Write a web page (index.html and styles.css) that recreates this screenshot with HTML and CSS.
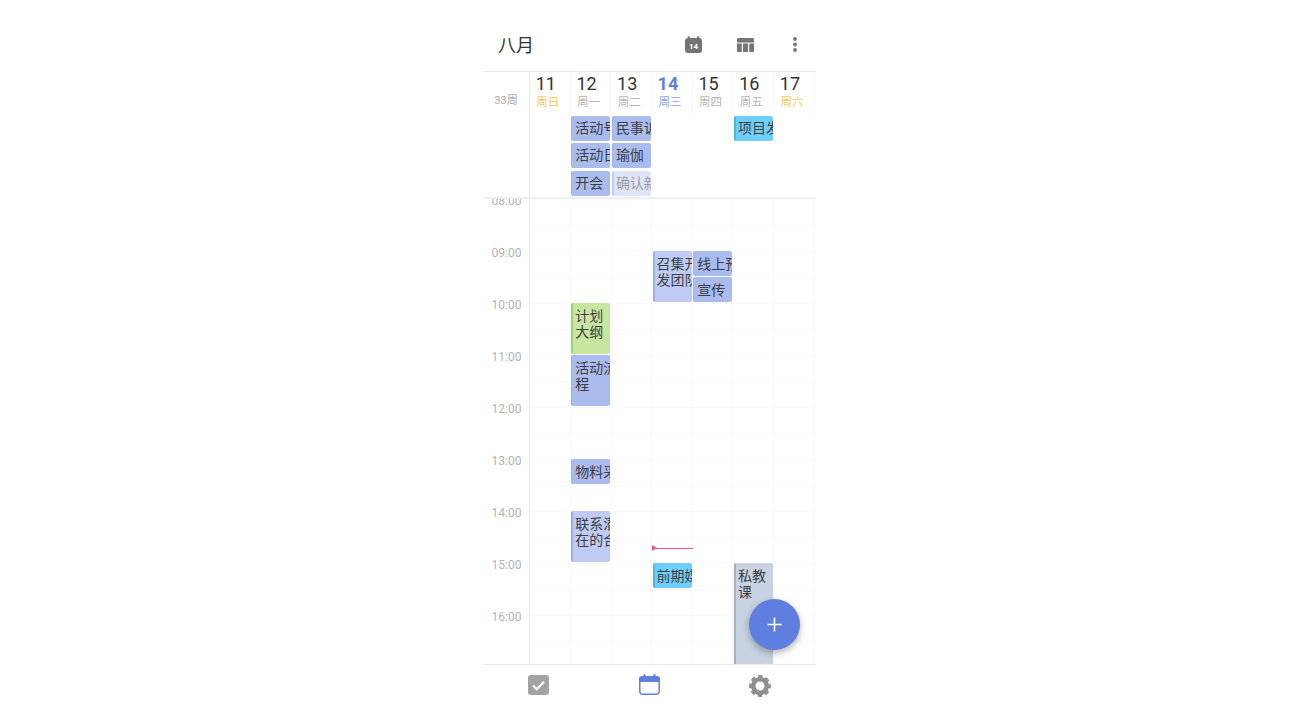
FILE: index.html
```html
<!DOCTYPE html>
<html lang="zh-CN">

<head>
    <meta charset="UTF-8">
    <meta name="viewport" content="width=device-width, initial-scale=1.0">
    <title>八月</title>
    <link rel="stylesheet" href="styles.css">
</head>

<body>
    <div class="phone">
        <header class="topbar">
            <h1>八月</h1>
            <div class="actions">
                <svg class="icon-today" viewBox="0 0 17 17">
                    <path fill="#757575" d="M2.500 1.500a1 1 0 0 1 2.500 0V2h7v-.5a1 1 0 0 1 2.500 0V2H14a3 3 0 0 1 3 3v9a3 3 0 0 1-3 3H3a3 3 0 0 1-3-3V5a3 3 0 0 1 2.500-3z"/>
                    <text x="8.500" y="12.800" text-anchor="middle" class="today-num">14</text>
                </svg>
                <svg class="icon-table" viewBox="0 0 17 14">
                    <path fill="#757575" d="M1 0h15a1 1 0 0 1 1 1v3.500H0V1a1 1 0 0 1 1-1zM0 5.500h4.800V14H1a1 1 0 0 1-1-1zM6 5.500h5V14H6zM12.200 5.500H17V13a1 1 0 0 1-1 1h-3.800z"/>
                </svg>
                <svg class="icon-more" viewBox="0 0 4 15">
                    <circle cx="2" cy="2" r="1.900" fill="#757575"/>
                    <circle cx="2" cy="7.500" r="1.900" fill="#757575"/>
                    <circle cx="2" cy="13" r="1.900" fill="#757575"/>
                </svg>
            </div>
        </header>

        <section class="weekhead">
            <div class="daterow">
                <div class="weeknum">33周</div>
                <div class="day"><b>11</b><span class="weekend">周日</span></div>
                <div class="day"><b>12</b><span>周一</span></div>
                <div class="day"><b>13</b><span>周二</span></div>
                <div class="day today"><b>14</b><span>周三</span></div>
                <div class="day"><b>15</b><span>周四</span></div>
                <div class="day"><b>16</b><span>周五</span></div>
                <div class="day"><b>17</b><span class="weekend">周六</span></div>
            </div>
            <div class="allday">
                <div class="ev indigo col-2 allrow-1">活动号</div>
                <div class="ev indigo col-3 allrow-1">民事诉</div>
                <div class="ev sky col-6 allrow-1">项目发</div>
                <div class="ev indigo col-2 allrow-2">活动日</div>
                <div class="ev indigo col-3 allrow-2">瑜伽</div>
                <div class="ev indigo col-2 allrow-3">开会</div>
                <div class="ev faded col-3 allrow-3">确认新</div>
            </div>
        </section>

        <main class="schedule">
            <div class="times">
                <div>08:00</div>
                <div>09:00</div>
                <div>10:00</div>
                <div>11:00</div>
                <div>12:00</div>
                <div>13:00</div>
                <div>14:00</div>
                <div>15:00</div>
                <div>16:00</div>
                <div>17:00</div>
            </div>
            <div class="week">
                <div class="ev light col-4 row-3 span-2">召集开<br>发团队</div>
                <div class="ev indigo col-5 row-3 span-1">线上预</div>
                <div class="ev indigo col-5 row-4 span-1">宣传</div>
                <div class="ev green col-2 row-5 span-2">计划<br>大纲</div>
                <div class="ev indigo col-2 row-7 span-2">活动流<br>程</div>
                <div class="ev indigo col-2 row-11 span-1">物料采</div>
                <div class="ev light col-2 row-13 span-2">联系潜<br>在的合</div>
                <div class="ev sky col-4 row-15 span-1">前期媒</div>
                <div class="ev slate col-6 row-15 span-4">私教<br>课</div>
                <div class="nowline"></div>
            </div>
        </main>

        <button class="fab" type="button">
            <svg viewBox="0 0 16 16"><path d="M8 .5v15M.5 8h15" stroke="#fff" stroke-width="1.700"/></svg>
        </button>

        <nav class="tabbar">
            <svg class="tab-check" viewBox="0 0 21 20">
                <rect width="21" height="20" rx="3" fill="#a3a3a3"/>
                <path d="M5 10.500l3.800 3.800L16 6.800" fill="none" stroke="#fff" stroke-width="2"/>
            </svg>
            <svg class="tab-cal" viewBox="0 0 21 21">
                <path fill="#5f7fe0" d="M4.500 1a1 1 0 0 1 2 0v1h8V1a1 1 0 0 1 2 0v1H18a3 3 0 0 1 3 3v3H0V5a3 3 0 0 1 3-3h1.500z"/>
                <path fill="none" stroke="#5f7fe0" stroke-width="1.500" d="M.8 8v9.500a2.700 2.700 0 0 0 2.700 2.700h14a2.700 2.700 0 0 0 2.700-2.700V8"/>
            </svg>
            <svg class="tab-gear" viewBox="0 0 22 22">
                <circle cx="11" cy="11" r="6.800" fill="none" stroke="#8f8f8f" stroke-width="4.600"/>
                <circle cx="11" cy="11" r="9.500" fill="none" stroke="#8f8f8f" stroke-width="2.800" stroke-dasharray="4.500 2.960" stroke-dashoffset="2.250"/>
            </svg>
        </nav>
    </div>
</body>

</html>
```

FILE: styles.css
```css
* {
    box-sizing: border-box;
}

html, body {
    margin: 0;
    height: 100%;
    background: #fff;
}

body {
    font-family: Roboto, "Noto Sans CJK SC", sans-serif;
    color: #3a3e47;
    overflow: hidden;
}

.phone {
    position: relative;
    width: 332px;
    height: 727px;
    margin: 0 auto;
    display: flex;
    flex-direction: column;
    overflow: hidden;
}

/* top bar */
.topbar {
    height: 52px;
    margin-top: 20px;
    padding: 0 0 0 14px;
    display: flex;
    align-items: center;
    justify-content: space-between;
    border-bottom: 1px solid #ececec;
    flex: none;
}

.topbar h1 {
    margin: 0;
    font-size: 18px;
    font-weight: 400;
    color: #333;
    line-height: 24px;
}

.actions {
    display: flex;
    align-items: center;
    margin-bottom: 2px;
}

.icon-today {
    width: 17px;
    height: 17px;
    margin-right: 34.500px;
}

.today-num {
    fill: #fff;
    font-family: Roboto, sans-serif;
    font-size: 8px;
    font-weight: 700;
}

.icon-table {
    width: 17px;
    height: 14px;
    margin-right: 39.500px;
}

.icon-more {
    width: 4px;
    height: 15px;
    margin-right: 19px;
}

/* week header */
.weekhead {
    height: 127px;
    flex: none;
    border-bottom: 2px solid #efefef;
    background: linear-gradient(#ececec, #ececec) 45px 0 / 1px 100% no-repeat;
}

.daterow {
    display: grid;
    grid-template-columns: 46px repeat(7, 40.7px);
    height: 42px;
}

.weeknum {
    font-size: 11px;
    color: #aaa;
    text-align: center;
    line-height: 14px;
    padding: 22px 2px 0 0;
}

.day {
    display: flex;
    flex-direction: column;
    align-items: center;
    padding: 1px 5px 0 0;
    border-right: 1px solid #f7f7f7;
}

.day b {
    font-size: 18px;
    font-weight: 400;
    line-height: 21px;
    color: #333;
    margin-right: 3px;
}

.day span {
    font-size: 11.500px;
    line-height: 14px;
    margin: 1px 0 0 1px;
    color: #b4b4b4;
}

.day span.weekend {
    color: #f7c94f;
}

.today b {
    font-weight: 700;
    color: #5f7fe0;
}

.today span {
    color: #8ba2ea;
}

.allday {
    display: grid;
    grid-template-columns: repeat(7, 40.7px);
    grid-template-rows: repeat(3, 25px);
    gap: 2.7px 0;
    margin: 1.500px 0 0 46px;
    height: 84px;
}

/* events */
.ev {
    width: 39px;
    margin: 0 0 1px 0.500px;
    padding: 5px 0 0 3px;
    font-size: 14px;
    line-height: 16px;
    white-space: nowrap;
    border-left: 1px solid transparent;
    border-radius: 2px;
    overflow: hidden;
}

.allday .ev {
    margin-bottom: 0;
    padding-top: 4px;
}

.indigo {
    background: #aabbee;
    border-left-color: #9fb2ea;
}

.light {
    background: #bfcbf2;
    border-left: 2px solid #9aaee9;
    padding-left: 2px;
}

.faded {
    background: #dfe4f8;
    border-left: 2px solid #c3cef3;
    padding-left: 2px;
    color: #9a9caa;
}

.green {
    background: #c8e6a0;
    border-left: 2px solid #a5d06f;
    padding-left: 2px;
}

.sky {
    background: #6fcffb;
    border-left: 2px solid #45b9ee;
    padding-left: 2px;
}

.slate {
    background: #c9d2e1;
    border-left: 2px solid #a5b1c9;
    padding-left: 2px;
}

.col-2 { grid-column: 2; }
.col-3 { grid-column: 3; }
.col-4 { grid-column: 4; }
.col-5 { grid-column: 5; }
.col-6 { grid-column: 6; }

.allrow-1 { grid-row: 1; }
.allrow-2 { grid-row: 2; }
.allrow-3 { grid-row: 3; }

.row-3 { grid-row-start: 3; }
.row-4 { grid-row-start: 4; }
.row-5 { grid-row-start: 5; }
.row-7 { grid-row-start: 7; }
.row-11 { grid-row-start: 11; }
.row-13 { grid-row-start: 13; }
.row-15 { grid-row-start: 15; }

.span-1 { grid-row-end: span 1; }
.span-2 { grid-row-end: span 2; }
.span-4 { grid-row-end: span 4; }

/* hour grid */
.schedule {
    flex: none;
    height: 465px;
    display: flex;
    overflow: hidden;
}

.times {
    width: 46px;
    flex: none;
    border-right: 1px solid #ececec;
    font-size: 12px;
    color: #b4b4b4;
    text-align: center;
}

.times div {
    height: 52px;
    line-height: 16px;
    position: relative;
    top: -6px;
}

.week {
    position: relative;
    flex: 1;
    display: grid;
    grid-template-columns: repeat(7, 40.7px);
    grid-template-rows: repeat(18, 26px);
    background-image:
        linear-gradient(to right, transparent 39.7px, #f8f8f8 39.7px),
        linear-gradient(to bottom, #f9f9f9 1px, transparent 1px);
    background-size: 40.7px 100%, 100% 26px;
}

.nowline {
    position: absolute;
    left: 122px;
    top: 349px;
    width: 40.500px;
    height: 1px;
    background: #f4568a;
}

.nowline::before {
    content: "";
    position: absolute;
    left: 0;
    top: -3px;
    border-left: 5px solid #f4568a;
    border-top: 3.500px solid transparent;
    border-bottom: 3.500px solid transparent;
}

/* add button */
.fab {
    position: absolute;
    left: 265px;
    top: 599px;
    width: 51px;
    height: 51px;
    padding: 0;
    border: none;
    border-radius: 50%;
    background: #5f7fe0;
    box-shadow: 0 3px 7px rgba(0, 0, 0, 0.3);
    display: flex;
    align-items: center;
    justify-content: center;
}

.fab svg {
    width: 15px;
    height: 15px;
}

/* bottom tabs */
.tabbar {
    flex: 1;
    border-top: 1px solid #ececec;
    display: flex;
    align-items: flex-start;
    padding: 9px 0 0 44px;
}

.tab-check {
    width: 21px;
    height: 20px;
    margin-top: 1px;
    margin-right: 90px;
}

.tab-cal {
    width: 21px;
    height: 21px;
    margin-right: 89px;
}

.tab-gear {
    width: 22px;
    height: 22px;
    margin-top: 1px;
}
```
